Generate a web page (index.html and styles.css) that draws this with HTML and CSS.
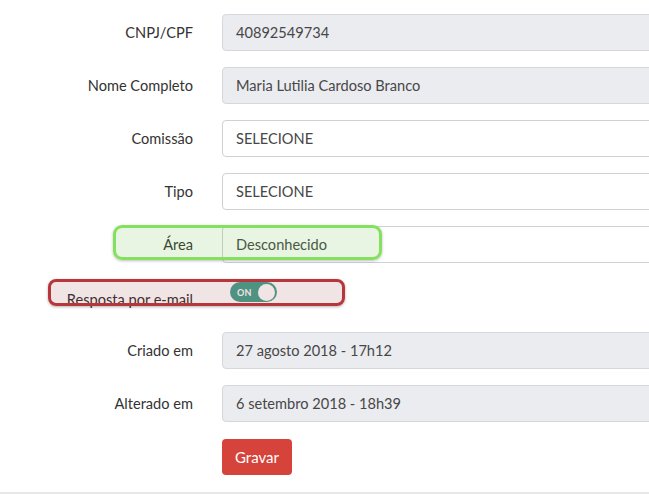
FILE: index.html
```html
<!DOCTYPE html>
<html lang="pt">
<head>
<meta charset="utf-8">
<title>Formulário</title>
<link rel="stylesheet" href="styles.css">
</head>
<body>
<div class="page">
  <form class="form">
    <div class="row">
      <label class="label">CNPJ/CPF</label>
      <div class="field readonly">40892549734</div>
    </div>
    <div class="row">
      <label class="label">Nome Completo</label>
      <div class="field readonly">Maria Lutilia Cardoso Branco</div>
    </div>
    <div class="row">
      <label class="label">Comissão</label>
      <div class="field select">SELECIONE</div>
    </div>
    <div class="row">
      <label class="label">Tipo</label>
      <div class="field select">SELECIONE</div>
    </div>
    <div class="row">
      <label class="label">Área</label>
      <div class="field select">Desconhecido</div>
    </div>
    <div class="row">
      <label class="label label-low">Resposta por e-mail</label>
      <div class="toggle-wrap">
        <span class="toggle"><span class="toggle-text">ON</span><span class="knob"></span></span>
      </div>
    </div>
    <div class="row">
      <label class="label">Criado em</label>
      <div class="field readonly">27 agosto 2018 - 17h12</div>
    </div>
    <div class="row">
      <label class="label">Alterado em</label>
      <div class="field readonly">6 setembro 2018 - 18h39</div>
    </div>
    <div class="row">
      <span></span>
      <div><button type="button" class="btn">Gravar</button></div>
    </div>
  </form>
  <div class="footer-line"></div>
  <div class="hl hl-green"></div>
  <div class="hl hl-red"></div>
</div>
</body>
</html>
```
FILE: styles.css
```css
html, body {
  margin: 0;
  padding: 0;
  background: #fff;
  overflow: hidden;
}
body {
  font-family: "Lato", "Open Sans", sans-serif;
  font-size: 14.5px;
  color: #333;
}
.page {
  position: relative;
  width: 649px;
  height: 497px;
  overflow: hidden;
}
.form {
  padding-top: 14px;
  display: flex;
  flex-direction: column;
  gap: 16px;
}
.row {
  display: grid;
  grid-template-columns: 193px 700px;
  column-gap: 29px;
  align-items: center;
  min-height: 37px;
}
.label {
  text-align: right;
  color: #333;
  font-size: 14.6px;
  margin-top: -1px;
}
.label-low {
  padding-top: 4px;
}
.field {
  box-sizing: border-box;
  height: 37px;
  padding: 0 13px;
  display: flex;
  align-items: center;
  border-radius: 4px;
  color: #474747;
  font-size: 14.6px;
}
.readonly {
  background: #ebecf0;
  border: 1px solid #d6d7db;
}
.select {
  background: #fff;
  border: 1px solid #cfd0d3;
}
.toggle-wrap {
  padding-left: 8px;
  align-self: start;
  padding-top: 3px;
}
.toggle {
  box-sizing: border-box;
  display: flex;
  align-items: center;
  justify-content: space-between;
  width: 47px;
  height: 20px;
  background: #46a290;
  border-radius: 10px;
  padding: 0 2px 0 7px;
}
.toggle-text {
  color: #fff;
  font-size: 9px;
  font-weight: 700;
  letter-spacing: 0.3px;
}
.knob {
  width: 17px;
  height: 17px;
  border-radius: 50%;
  background: #fff;
}
.btn {
  box-sizing: border-box;
  width: 70px;
  height: 36px;
  border: none;
  border-radius: 4px;
  background: #d6433b;
  color: #fff;
  font-family: "Lato", "Open Sans", sans-serif;
  font-size: 15px;
  padding: 0;
}
.footer-line {
  margin-top: 17px;
  height: 2px;
  background: #e6e7ea;
}
.hl {
  position: absolute;
  box-sizing: border-box;
  border-width: 3px;
  border-style: solid;
}
.hl-green {
  left: 113px;
  top: 225px;
  width: 269px;
  height: 35px;
  border-color: #84e05e;
  border-radius: 9px;
  background: rgba(100, 190, 60, 0.15);
  box-shadow: 0 1px 3px rgba(0, 0, 0, 0.25);
}
.hl-red {
  left: 48px;
  top: 279px;
  width: 297px;
  height: 27px;
  border-color: #b6363b;
  border-radius: 8px;
  background: rgba(140, 30, 30, 0.12);
  box-shadow: 0 1px 3px rgba(0, 0, 0, 0.3);
}
```
